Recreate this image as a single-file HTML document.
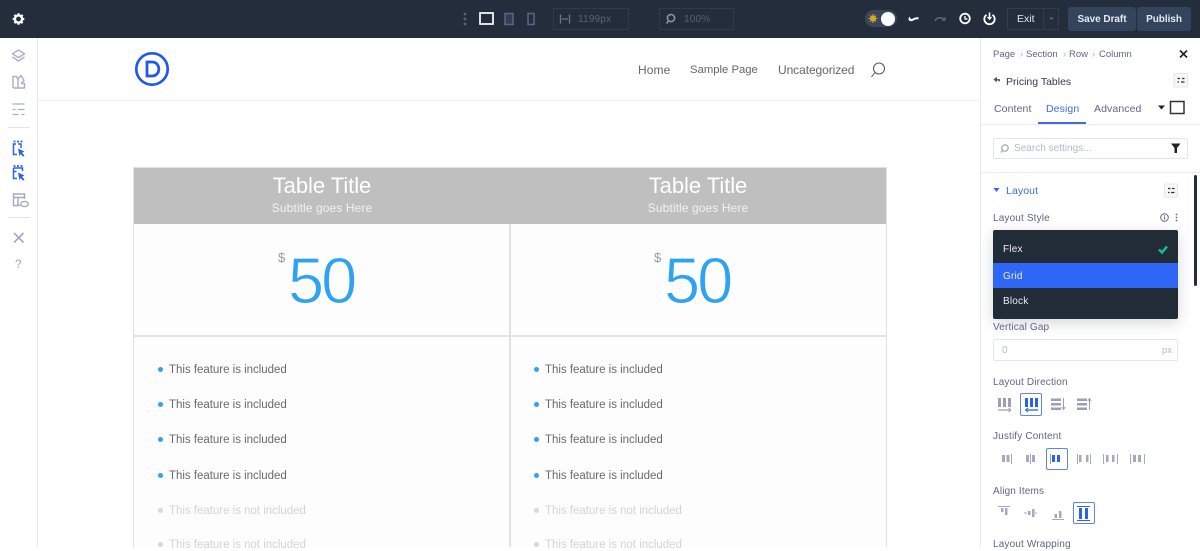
<!DOCTYPE html>
<html><head><meta charset="utf-8"><style>
html,body{margin:0;padding:0;width:1200px;height:547px;overflow:hidden;background:#fff;font-family:"Liberation Sans",sans-serif}
.a{position:absolute;white-space:nowrap;line-height:1}
.box{position:absolute;box-sizing:border-box}
.c{text-align:center}
.lb{font-size:10px;color:#5f6684;letter-spacing:.15px}
.f{font-size:11.5px;color:#6a6a6a;letter-spacing:-.02px}
.n{font-size:11.5px;color:#d4d4d4;letter-spacing:-.02px}
.d{position:absolute;width:5px;height:5px;border-radius:50%;background:#2ea3f2}
.dn{background:#d8d8d8}
</style></head><body>
<div class="box" style="left:0;top:0;width:1200px;height:38px;background:#232d3b"></div>
<div class="box" style="left:38px;top:38px;width:942px;height:63px;background:#fff;border-bottom:1px solid #eef0f2"></div>
<div class="box" style="left:0;top:38px;width:38px;height:509px;background:#fff;border-right:1px solid #e6e8ee"></div>
<div class="box" style="left:980px;top:38px;width:220px;height:509px;background:#fff;border-left:1px solid #e6e8ee"></div>

<div class="box" style="left:553px;top:8px;width:76px;height:22px;border:1px solid #2f3a4a"></div>
<div class="a" style="left:578px;top:15px;font-size:10px;color:#566176;letter-spacing:.2px">1199px</div>
<div class="box" style="left:659px;top:8px;width:75px;height:22px;border:1px solid #2f3a4a"></div>
<div class="a" style="left:684px;top:15px;font-size:10px;color:#566176;letter-spacing:.2px">100%</div>
<div class="box" style="left:1007px;top:8px;width:52px;height:22px;border:1px solid #313c4c"></div>
<div class="box" style="left:1043px;top:8px;width:1px;height:22px;background:#313c4c"></div>
<div class="a" style="left:1017px;top:14px;font-size:10.5px;color:#e4e8ee">Exit</div>
<div class="box" style="left:1068px;top:7px;width:68px;height:24px;background:#33445c;border-radius:3px"></div>
<div class="box" style="left:1137px;top:7px;width:54px;height:24px;background:#33445c;border-radius:3px"></div>
<div class="a c" style="left:1068px;top:14.5px;width:68px;font-size:10px;font-weight:bold;color:#e6eaf0;letter-spacing:-.05px">Save Draft</div>
<div class="a c" style="left:1137px;top:14.5px;width:54px;font-size:10px;font-weight:bold;color:#e6eaf0;letter-spacing:-.05px">Publish</div>

<div class="a" style="left:638px;top:64px;font-size:12px;color:#666;letter-spacing:.1px">Home</div>
<div class="a" style="left:690px;top:65px;font-size:11.3px;color:#666">Sample Page</div>
<div class="a" style="left:778px;top:64px;font-size:12px;color:#666;letter-spacing:-.08px">Uncategorized</div>

<!-- pricing table -->
<div class="box" style="left:133px;top:167px;width:754px;height:380px;background:#fdfdfd;border:1px solid #e2e2e2;border-bottom:0"></div>
<div class="box" style="left:134px;top:168px;width:752px;height:56px;background:#bfbfbf"></div>
<div class="box" style="left:509px;top:224px;width:2px;height:323px;background:#e2e2e2"></div>
<div class="box" style="left:134px;top:335px;width:752px;height:2px;background:#e4e4e4"></div>

<div class="a c" style="left:134px;top:175px;width:376px;font-size:22px;color:#fff;letter-spacing:-.05px">Table Title</div>
<div class="a c" style="left:134px;top:202px;width:376px;font-size:12px;color:#f2f2f2;letter-spacing:.1px">Subtitle goes Here</div>
<div class="a c" style="left:510px;top:175px;width:376px;font-size:22px;color:#fff;letter-spacing:-.05px">Table Title</div>
<div class="a c" style="left:510px;top:202px;width:376px;font-size:12px;color:#f2f2f2;letter-spacing:.1px">Subtitle goes Here</div>
<div class="a" style="left:278px;top:251px;font-size:13px;color:#999">$</div>
<div class="a" style="left:654px;top:251px;font-size:13px;color:#999">$</div>
<div class="a" style="left:288px;top:248px;font-size:65px;color:#2ea3f2;letter-spacing:-3px;-webkit-text-stroke:1px #fdfdfd">50</div>
<div class="a" style="left:664px;top:248px;font-size:65px;color:#2ea3f2;letter-spacing:-3px;-webkit-text-stroke:1px #fdfdfd">50</div>

<div class="d" style="left:158px;top:367px"></div><div class="a f" style="left:169px;top:364.500px">This feature is included</div>
<div class="d" style="left:158px;top:402px"></div><div class="a f" style="left:169px;top:399.500px">This feature is included</div>
<div class="d" style="left:158px;top:437px"></div><div class="a f" style="left:169px;top:435px">This feature is included</div>
<div class="d" style="left:158px;top:473px"></div><div class="a f" style="left:169px;top:470.500px">This feature is included</div>
<div class="d dn" style="left:158px;top:508px"></div><div class="a n" style="left:169px;top:505.500px">This feature is not included</div>
<div class="d dn" style="left:158px;top:542px"></div><div class="a n" style="left:169px;top:539.500px">This feature is not included</div>
<div class="d" style="left:534px;top:367px"></div><div class="a f" style="left:545px;top:364.500px">This feature is included</div>
<div class="d" style="left:534px;top:402px"></div><div class="a f" style="left:545px;top:399.500px">This feature is included</div>
<div class="d" style="left:534px;top:437px"></div><div class="a f" style="left:545px;top:435px">This feature is included</div>
<div class="d" style="left:534px;top:473px"></div><div class="a f" style="left:545px;top:470.500px">This feature is included</div>
<div class="d dn" style="left:534px;top:508px"></div><div class="a n" style="left:545px;top:505.500px">This feature is not included</div>
<div class="d dn" style="left:534px;top:542px"></div><div class="a n" style="left:545px;top:539.500px">This feature is not included</div>

<!-- right panel -->
<div class="a lb" style="left:993px;top:49.500px;font-size:9.5px;letter-spacing:0">Page</div>
<div class="a lb" style="left:1020px;top:49.500px;font-size:9.5px;color:#a9aec0">›</div>
<div class="a lb" style="left:1026px;top:49.500px;font-size:9.5px;letter-spacing:0">Section</div>
<div class="a lb" style="left:1063px;top:49.500px;font-size:9.5px;color:#a9aec0">›</div>
<div class="a lb" style="left:1069px;top:49.500px;font-size:9.5px;letter-spacing:0">Row</div>
<div class="a lb" style="left:1092px;top:49.500px;font-size:9.5px;color:#a9aec0">›</div>
<div class="a lb" style="left:1099px;top:49.500px;font-size:9.5px;letter-spacing:0">Column</div>
<div class="a" style="left:1006px;top:76.500px;font-size:10.5px;color:#333a4a">Pricing Tables</div>
<div class="a" style="left:994px;top:103.500px;font-size:10.5px;color:#5f6684;letter-spacing:.1px">Content</div>
<div class="a" style="left:1046px;top:103.500px;font-size:10.5px;color:#3f6ae0;letter-spacing:.1px">Design</div>
<div class="a" style="left:1094px;top:103.500px;font-size:10.5px;color:#5f6684;letter-spacing:.1px">Advanced</div>
<div class="box" style="left:981px;top:124px;width:219px;height:1px;background:#e8eaf0"></div>
<div class="box" style="left:1038px;top:122px;width:48px;height:2px;background:#3f6ae0"></div>
<div class="box" style="left:993px;top:138px;width:195px;height:21px;border:1px solid #e3e6ef;border-radius:2px"></div>
<div class="a" style="left:1014px;top:144px;font-size:10px;color:#b4b8ca;letter-spacing:.02px">Search settings...</div>
<div class="box" style="left:981px;top:172px;width:219px;height:1px;background:#e8eaf0"></div>
<div class="box" style="left:1194px;top:175px;width:3px;height:111px;background:#232d3b;border-radius:2px"></div>
<div class="a" style="left:1006px;top:186px;font-size:10.5px;color:#3f6ae0;letter-spacing:.1px">Layout</div>
<div class="a lb" style="left:993px;top:214px">Layout Style</div>
<div class="box" style="left:993px;top:230px;width:185px;height:89px;background:#222b38;border-radius:2px;box-shadow:0 4px 14px rgba(30,40,60,.18)"></div>
<div class="box" style="left:993px;top:263px;width:185px;height:25px;background:#2f66f6"></div>
<div class="a" style="left:1003px;top:245px;font-size:10px;color:#e8ebf0;letter-spacing:.2px">Flex</div>
<div class="a" style="left:1003px;top:272px;font-size:10px;color:#e8ebf0;letter-spacing:.2px">Grid</div>
<div class="a" style="left:1003px;top:297px;font-size:10px;color:#e8ebf0;letter-spacing:.2px">Block</div>
<div class="a lb" style="left:993px;top:323px">Vertical Gap</div>
<div class="box" style="left:993px;top:339px;width:185px;height:22px;border:1px solid #e3e6ef;border-radius:2px"></div>
<div class="a" style="left:1002px;top:346px;font-size:10px;color:#b4b8ca">0</div>
<div class="a" style="left:1162px;top:346px;font-size:9.5px;color:#b4b8ca">px</div>
<div class="a lb" style="left:993px;top:378px">Layout Direction</div>
<div class="box" style="left:1020px;top:393px;width:22px;height:23px;border:1px solid #5f85e8;border-radius:2px"></div>
<div class="a lb" style="left:993px;top:432px">Justify Content</div>
<div class="box" style="left:1046px;top:448px;width:22px;height:22px;border:1px solid #5f85e8;border-radius:2px"></div>
<div class="a lb" style="left:993px;top:487px">Align Items</div>
<div class="box" style="left:1073px;top:502px;width:22px;height:22px;border:1px solid #5f85e8;border-radius:2px"></div>
<div class="a lb" style="left:993px;top:540px">Layout Wrapping</div>

<svg class="a" style="left:0;top:0;filter:blur(.25px)" width="1200" height="547" viewBox="0 0 1200 547" fill="none">
<!-- gear -->
<circle cx="18.5" cy="19" r="3.6" stroke="#fff" stroke-width="2.4"/>
<path d="M18.5 13.2v2M18.5 22.8v2M12.7 19h2M22.3 19h2M14.4 14.9l1.4 1.4M21.2 21.7l1.4 1.4M14.4 23.1l1.4-1.4M21.2 16.3l1.4-1.4" stroke="#fff" stroke-width="2.2"/>
<!-- top centre -->
<g fill="#5b6678"><circle cx="465" cy="14" r="1.4"/><circle cx="465" cy="19" r="1.4"/><circle cx="465" cy="24" r="1.4"/></g>
<rect x="480" y="13" width="13" height="11" stroke="#fff" stroke-width="1.7"/>
<rect x="505" y="13.5" width="8" height="11" stroke="#59678a" stroke-width="1.5" fill="#333d55"/>
<rect x="528" y="13.5" width="6" height="11" stroke="#59678a" stroke-width="1.5"/>
<path d="M560.500 14.500v9M569.500 14.500v9M562 19h6" stroke="#6d7789" stroke-width="1.300"/>
<circle cx="671" cy="18" r="3.600" stroke="#8a94a5" stroke-width="1.600"/><path d="M668.500 21l-2 2.500" stroke="#8a94a5" stroke-width="1.500"/>
<!-- toggle -->
<rect x="865" y="10" width="32" height="17" rx="8.500" fill="#3a465a"/>
<circle cx="873" cy="18.500" r="3" fill="#d9a520"/><path d="M873 14v9M868.500 18.500h9M870 15.500l6 6M876 15.500l-6 6" stroke="#d9a520" stroke-width="1"/>
<circle cx="888" cy="19" r="7" fill="#fff"/>
<path d="M909 18.500c1 2.500 3 1.800 4.500.8s3-1.500 5-.8" stroke="#fff" stroke-width="2"/><path d="M909 16.500v4h3.500z" fill="#fff"/>
<path d="M935 21c1-3 4-3.500 6-3l4 1" stroke="#5b6678" stroke-width="1.600"/><path d="M945.500 16.500v4.500h-4z" fill="#5b6678"/>
<circle cx="965" cy="18.500" r="4.800" stroke="#fff" stroke-width="1.800"/><path d="M965 16v3h2.500" stroke="#fff" stroke-width="1.300"/>
<path d="M986.500 14.800a5.200 5.200 0 1 0 6 0" stroke="#fff" stroke-width="1.800"/><path d="M989.500 12.500v6.500" stroke="#fff" stroke-width="1.600"/><path d="M987.500 17l2 2.200 2-2.200" stroke="#fff" stroke-width="1.200"/>
<path d="M1049 17.500h5l-2.500 2.500z" fill="#5b6678"/>
<!-- logo -->
<circle cx="152" cy="69" r="15.700" stroke="#2059ea" stroke-width="2.700"/>
<path d="M147 62v14h4.800c4.400 0 7-3 7-7s-2.600-7-7-7z" stroke="#2059ea" stroke-width="2.800"/>
<!-- search -->
<circle cx="879" cy="68.500" r="5.500" stroke="#555" stroke-width="1"/><path d="M875 72.500l-3.500 4.500" stroke="#555" stroke-width="1"/>
<!-- left rail -->
<g stroke="#a9aec4" stroke-width="1.400" stroke-linejoin="round">
<path d="M18.500 50l6 3.800-6 3.800-6-3.800z"/><path d="M12.500 57l6 4 6-4"/>
<path d="M13 76.500h3.500l1.500 3v8.500h-3.500c-1 0-1.500-.5-1.500-1.500zM18 79l3-3.500 3 5-3 3M18 88h6.500v-4.500H21"/>
<path d="M12.500 104h12M12.500 109.500h3M18 109.500h6.500M12.500 114.500h6M21.500 114.500h3" stroke-width="1.300"/>
</g>
<path d="M8 127.500h22M8 217.500h22" stroke="#e3e5ea" stroke-width="1"/>
<g stroke="#2a63e6" stroke-width="1.500"><path d="M16 144h-2.500v10.500H17M21 148v-4h-3"/><path d="M13.500 141.500h2M17 141.500h2M20.500 141.500h2" stroke-width="1.800"/>
<path d="M13.500 168h9v3M13.500 168v10.500H17M13.500 171.500h3" /><path d="M13.500 166h2M17 166h2M20.500 166h2" stroke-width="1.800"/></g>
<path d="M18 148.500l6.500 3-2.500 1.200 2.500 2.800-1.500 1.300-2.300-2.800-1.200 2.500z" fill="#2a63e6"/>
<path d="M18 172.500l6.500 3-2.500 1.200 2.500 2.800-1.500 1.300-2.300-2.800-1.200 2.500z" fill="#2a63e6"/>
<g stroke="#a4a9c0" stroke-width="1.400"><path d="M20 205.500h-6.500v-11.500h11v5M13.500 197.500h11M18 197.500v8"/><ellipse cx="24.500" cy="204" rx="3.800" ry="2.600"/></g>
<path d="M14 233l9.500 9.500M23.500 233l-9.500 9.500" stroke="#a4a9bd" stroke-width="1.600"/>
<text x="15" y="268" font-family="Liberation Sans" font-size="12" fill="#a4a9c0">?</text>
<!-- panel icons -->
<path d="M1180 50.500l7 7M1187 50.500l-7 7" stroke="#222" stroke-width="1.600"/>
<path d="M994 79.500l2.500-2v4zM996 79.500h3.500v2" fill="#555" stroke="#555" stroke-width=".8"/>
<rect x="1174" y="73.500" width="13.500" height="13.500" rx="1.500" fill="#f7f7fa" stroke="#e3e5ec"/>
<path d="M1177.500 78.500h2.500M1182 78.500h2.500M1177.500 82h1.500M1181 82h3.500" stroke="#333" stroke-width="1.300"/>
<path d="M1158 105.500h7l-3.500 4z" fill="#222"/>
<rect x="1170.500" y="101.500" width="13.500" height="12" stroke="#333" stroke-width="1.500"/>
<circle cx="1005" cy="148" r="3.200" stroke="#9ca1b5" stroke-width="1.200"/><path d="M1002.700 150.500l-1.800 2" stroke="#9ca1b5" stroke-width="1.200"/>
<path d="M1171 143.500h9.500l-3.500 4.500v5h-2.500v-5z" fill="#222"/>
<path d="M993.500 188h6l-3 4z" fill="#2f66f6"/>
<rect x="1164.500" y="184" width="13" height="13" rx="1.500" fill="#f7f7fa" stroke="#e3e5ec"/>
<path d="M1168 188.500h2.500M1172 188.500h2.500M1168 192.500h1.500M1171 192.500h3.500" stroke="#333" stroke-width="1.300"/>
<circle cx="1164.500" cy="217.500" r="3.800" stroke="#5f6684"/><path d="M1164.500 216.500v3M1164.500 215v.8" stroke="#5f6684"/>
<g fill="#5f6684"><circle cx="1176.500" cy="214.500" r=".9"/><circle cx="1176.500" cy="217.500" r=".9"/><circle cx="1176.500" cy="220.500" r=".9"/></g>
<path d="M1159 249.500l3 3 5-6" stroke="#18b98a" stroke-width="2.600"/>
<!-- direction -->
<g fill="#9ba0b6"><rect x="998" y="398" width="3" height="9"/><rect x="1003" y="398" width="3" height="9"/><rect x="1008" y="398" width="3" height="9"/></g>
<path d="M998 410h12" stroke="#9ba0b6" stroke-width="1.300"/><path d="M1008.500 408l2.500 2-2.500 2" stroke="#9ba0b6"/>
<g fill="#2a63e6"><rect x="1025" y="398" width="3" height="9"/><rect x="1030" y="398" width="3" height="9"/><rect x="1035" y="398" width="3" height="9"/></g>
<path d="M1026 410h12" stroke="#2a63e6" stroke-width="1.300"/><path d="M1028 408l-2.500 2 2.500 2" stroke="#2a63e6"/>
<g fill="#9ba0b6"><rect x="1051" y="398.500" width="10" height="2.500"/><rect x="1051" y="403" width="10" height="2.500"/><rect x="1051" y="407.500" width="10" height="2.500"/>
<rect x="1077" y="398.500" width="10" height="2.500"/><rect x="1077" y="403" width="10" height="2.500"/><rect x="1077" y="407.500" width="10" height="2.500"/></g>
<path d="M1063.500 398v11M1061.800 407l1.700 2.500 1.700-2.500M1089.500 399v11M1087.800 401l1.700-2.500 1.700 2.500" stroke="#9ba0b6"/>
<!-- justify -->
<g fill="#a4a9bd">
<rect x="1002" y="455" width="3" height="7"/><rect x="1006.500" y="455" width="3" height="7"/><rect x="1011" y="454" width="1" height="10"/>
<rect x="1026" y="455" width="3" height="7"/><rect x="1030" y="454" width="1" height="10"/><rect x="1032" y="455" width="3" height="7"/>
<rect x="1077" y="454" width="1" height="10"/><rect x="1079" y="455" width="2.500" height="7"/><rect x="1086" y="455" width="2.500" height="7"/><rect x="1090" y="454" width="1" height="10"/>
<rect x="1103" y="454" width="1" height="10"/><rect x="1106" y="455" width="2.500" height="7"/><rect x="1112" y="455" width="2.500" height="7"/><rect x="1117" y="454" width="1" height="10"/>
<rect x="1130" y="454" width="1" height="10"/><rect x="1133" y="455" width="3" height="7"/><rect x="1138" y="455" width="3" height="7"/><rect x="1144" y="454" width="1" height="10"/>
</g>
<g fill="#2a63e6"><rect x="1052" y="455" width="3" height="7"/><rect x="1057" y="455" width="3" height="7"/></g><rect x="1050" y="454" width="1" height="10" fill="#9ba0b6"/>
<!-- align -->
<g fill="#a4a9bd">
<rect x="998" y="506" width="12" height="1"/><rect x="1001" y="508" width="2.500" height="4"/><rect x="1005" y="508" width="2.500" height="7"/>
<path d="M1024 513h3" stroke="#a4a9bd"/><rect x="1028" y="511" width="2.500" height="4"/><rect x="1032" y="509" width="2.500" height="8"/><rect x="1035" y="512.500" width="2" height="1"/>
<rect x="1052" y="519" width="12" height="1"/><rect x="1054.500" y="514" width="2.500" height="4"/><rect x="1059" y="511" width="2.500" height="7"/>
</g>
<g fill="#2a63e6"><rect x="1079" y="508" width="3" height="11"/><rect x="1085" y="508" width="3" height="11"/><rect x="1077" y="506" width="13" height="1"/><rect x="1077" y="520" width="13" height="1"/></g>
</svg>
</body></html>
